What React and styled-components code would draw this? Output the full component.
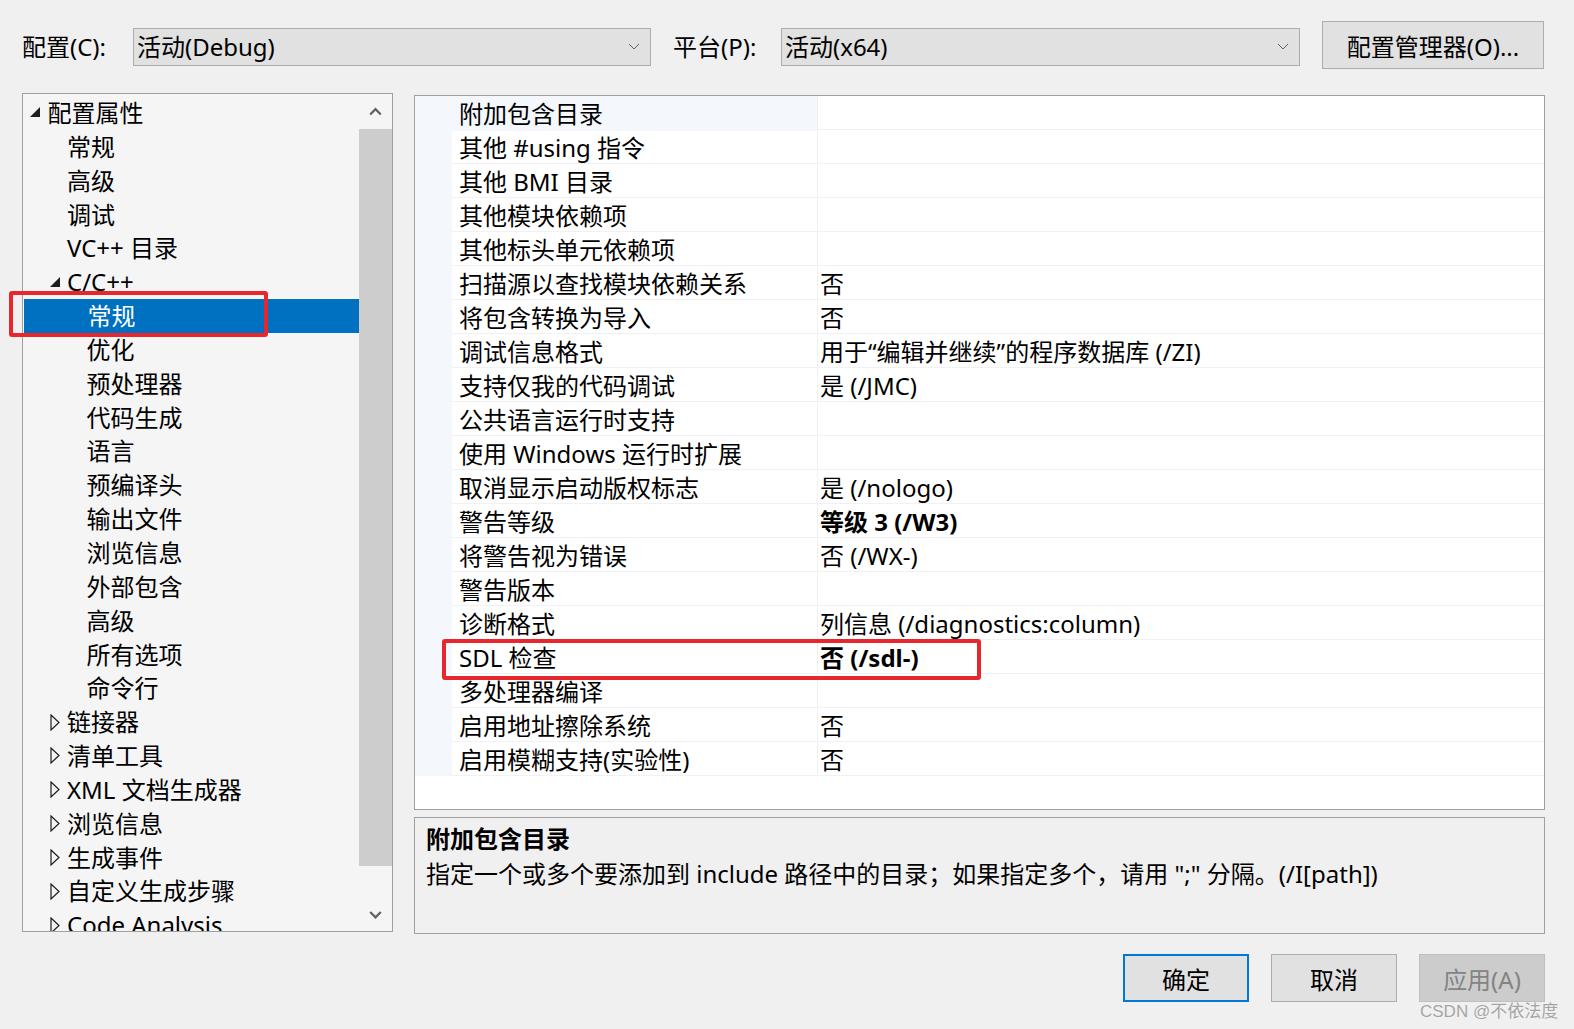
import React from "react";
import styled, { createGlobalStyle } from "styled-components";

const GlobalStyle = createGlobalStyle`
  html, body {
    margin: 0;
    padding: 0;
    background: #f0f0f0;
  }
  body {
    font-family: "Noto Sans", "Noto Sans CJK SC", sans-serif;
    color: #000;
  }
`;

const treeItems = [
  { label: "配置属性", level: 0, arrow: "open" },
  { label: "常规", level: 1 },
  { label: "高级", level: 1 },
  { label: "调试", level: 1 },
  { label: "VC++ 目录", level: 1 },
  { label: "C/C++", level: 1, arrow: "open" },
  { label: "常规", level: 2, selected: true },
  { label: "优化", level: 2 },
  { label: "预处理器", level: 2 },
  { label: "代码生成", level: 2 },
  { label: "语言", level: 2 },
  { label: "预编译头", level: 2 },
  { label: "输出文件", level: 2 },
  { label: "浏览信息", level: 2 },
  { label: "外部包含", level: 2 },
  { label: "高级", level: 2 },
  { label: "所有选项", level: 2 },
  { label: "命令行", level: 2 },
  { label: "链接器", level: 1, arrow: "closed" },
  { label: "清单工具", level: 1, arrow: "closed" },
  { label: "XML 文档生成器", level: 1, arrow: "closed" },
  { label: "浏览信息", level: 1, arrow: "closed" },
  { label: "生成事件", level: 1, arrow: "closed" },
  { label: "自定义生成步骤", level: 1, arrow: "closed" },
  { label: "Code Analysis", level: 1, arrow: "closed" },
];

const props = [
  { name: "附加包含目录", value: "", current: true },
  { name: "其他 #using 指令", value: "" },
  { name: "其他 BMI 目录", value: "" },
  { name: "其他模块依赖项", value: "" },
  { name: "其他标头单元依赖项", value: "" },
  { name: "扫描源以查找模块依赖关系", value: "否" },
  { name: "将包含转换为导入", value: "否" },
  { name: "调试信息格式", value: "用于“编辑并继续”的程序数据库 (/ZI)" },
  { name: "支持仅我的代码调试", value: "是 (/JMC)" },
  { name: "公共语言运行时支持", value: "" },
  { name: "使用 Windows 运行时扩展", value: "" },
  { name: "取消显示启动版权标志", value: "是 (/nologo)" },
  { name: "警告等级", value: "等级 3 (/W3)", bold: true },
  { name: "将警告视为错误", value: "否 (/WX-)" },
  { name: "警告版本", value: "" },
  { name: "诊断格式", value: "列信息 (/diagnostics:column)" },
  { name: "SDL 检查", value: "否 (/sdl-)", bold: true },
  { name: "多处理器编译", value: "" },
  { name: "启用地址擦除系统", value: "否" },
  { name: "启用模糊支持(实验性)", value: "否" },
];

const Chevron = ({ dir = "down", size = 12, stroke = 1, color = "#606060" }) => (
  <svg width={size} height={size / 2 + 2} viewBox="0 0 12 8">
    {dir === "down" ? (
      <polyline points="1,1 6,6 11,1" fill="none" stroke={color} strokeWidth={stroke} />
    ) : (
      <polyline points="1,7 6,2 11,7" fill="none" stroke={color} strokeWidth={stroke} />
    )}
  </svg>
);

const Arrow = ({ kind }) =>
  kind === "open" ? (
    <svg width="11" height="11" viewBox="0 0 11 11">
      <polygon points="10,0 10,10 0,10" fill="#1e1e1e" />
    </svg>
  ) : (
    <svg width="10" height="17" viewBox="0 0 10 17">
      <polygon points="1,1 9,8.5 1,16" fill="none" stroke="#1e1e1e" strokeWidth="1.2" />
    </svg>
  );

export default function App() {
  return (
    <Page>
      <GlobalStyle />
      <TopBar>
        <FieldLabel width={111}>配置(C):</FieldLabel>
        <Combo width={518}>
          <span>活动(Debug)</span>
          <Chevron />
        </Combo>
        <FieldLabel width={108} gap={22}>平台(P):</FieldLabel>
        <Combo width={519}>
          <span>活动(x64)</span>
          <Chevron />
        </Combo>
        <ManagerButton>配置管理器(O)...</ManagerButton>
      </TopBar>

      <Main>
        <TreeWrap>
          <TreePanel>
            <TreeList>
              {treeItems.map((it, i) => (
                <TreeRow key={i} level={it.level} selected={it.selected}>
                  <ArrowSlot>{it.arrow && <Arrow kind={it.arrow} />}</ArrowSlot>
                  <span>{it.label}</span>
                </TreeRow>
              ))}
            </TreeList>
            <ScrollBar>
              <ScrollButton>
                <Chevron dir="up" stroke={2} size={13} />
              </ScrollButton>
              <ScrollThumb />
              <ScrollButton bottom>
                <Chevron dir="down" stroke={2} size={13} />
              </ScrollButton>
            </ScrollBar>
          </TreePanel>
          <Highlight top={198} left={-13} width={259} height={46} />
        </TreeWrap>

        <RightColumn>
          <GridPanel>
            <GridBody>
              <Gutter />
              <Rows>
                {props.map((p, i) => (
                  <PropRow key={i}>
                    <NameCell current={p.current}>{p.name}</NameCell>
                    <ValueCell bold={p.bold}>{p.value}</ValueCell>
                  </PropRow>
                ))}
              </Rows>
            </GridBody>
            <Highlight top={543} left={27} width={539} height={41} />
          </GridPanel>
          <DescPanel>
            <DescTitle>附加包含目录</DescTitle>
            <DescText>
              指定一个或多个要添加到 include 路径中的目录；如果指定多个，请用 ";" 分隔。(/I[path])
            </DescText>
          </DescPanel>
        </RightColumn>
      </Main>

      <Footer>
        <DialogButton primary>确定</DialogButton>
        <DialogButton>取消</DialogButton>
        <DialogButton disabled>应用(A)</DialogButton>
      </Footer>

      <Watermark>CSDN @不依法度</Watermark>
    </Page>
  );
}

const Page = styled.div`
  position: relative;
  width: 1574px;
  height: 1029px;
  overflow: hidden;
  background: #f0f0f0;
  font-size: 24px;
  padding-left: 22px;
  box-sizing: border-box;
`;

const TopBar = styled.div`
  display: flex;
  align-items: center;
  height: 48px;
  margin-top: 21px;
`;

const FieldLabel = styled.div`
  width: ${(p) => p.width}px;
  margin-left: ${(p) => p.gap || 0}px;
  margin-top: 4px;
  line-height: 38px;
  white-space: nowrap;
`;

const Combo = styled.div`
  box-sizing: border-box;
  width: ${(p) => p.width}px;
  height: 38px;
  margin-top: 4px;
  display: flex;
  align-items: center;
  justify-content: space-between;
  padding: 0 10px 0 3px;
  background: #e1e1e1;
  border: 1px solid #adadad;
  line-height: 36px;
  white-space: nowrap;
`;

const ManagerButton = styled.div`
  box-sizing: border-box;
  width: 222px;
  height: 48px;
  margin-left: 22px;
  display: flex;
  align-items: center;
  justify-content: center;
  background: #e1e1e1;
  border: 1px solid #adadad;
  white-space: nowrap;
`;

const Main = styled.div`
  display: flex;
  align-items: flex-start;
  margin-top: 24px;
`;

const TreeWrap = styled.div`
  position: relative;
  width: 371px;
  height: 839px;
  flex-shrink: 0;
`;

const TreePanel = styled.div`
  box-sizing: border-box;
  width: 100%;
  height: 100%;
  display: flex;
  border: 1px solid #a0a0a0;
  background: #f5f5f5;
  overflow: hidden;
`;

const TreeList = styled.div`
  flex: 1;
  padding-top: 2px;
  overflow: hidden;
`;

const TreeRow = styled.div`
  display: flex;
  align-items: center;
  height: 33.85px;
  line-height: 33.85px;
  padding-left: ${(p) => 7 + p.level * 19.5}px;
  margin-left: ${(p) => (p.selected ? 1 : 0)}px;
  white-space: nowrap;
  background: ${(p) => (p.selected ? "#0070c0" : "transparent")};
  color: ${(p) => (p.selected ? "#fff" : "#000")};
`;

const ArrowSlot = styled.span`
  display: flex;
  align-items: center;
  width: 17.5px;
  flex-shrink: 0;
`;

const ScrollBar = styled.div`
  width: 33px;
  display: flex;
  flex-direction: column;
  background: #f0f0f0;
`;

const ScrollButton = styled.div`
  height: ${(p) => (p.bottom ? 65 : 35)}px;
  display: flex;
  align-items: ${(p) => (p.bottom ? "flex-end" : "center")};
  padding-bottom: ${(p) => (p.bottom ? 12 : 0)}px;
  box-sizing: border-box;
  justify-content: center;
  background: #f5f5f5;
`;

const ScrollThumb = styled.div`
  flex: 1;
  background: #cdcdcd;
`;

const Highlight = styled.div`
  position: absolute;
  top: ${(p) => p.top}px;
  left: ${(p) => p.left}px;
  width: ${(p) => p.width}px;
  height: ${(p) => p.height}px;
  box-sizing: border-box;
  border: 4px solid #e8262e;
  border-radius: 3px;
  pointer-events: none;
`;

const RightColumn = styled.div`
  display: flex;
  flex-direction: column;
  gap: 7px;
  width: 1131px;
  margin-left: 21px;
  margin-top: 2px;
`;

const GridPanel = styled.div`
  position: relative;
  box-sizing: border-box;
  height: 715px;
  border: 1px solid #a0a0a0;
  background: #fff;
`;

const GridBody = styled.div`
  display: flex;
  align-items: flex-start;
`;

const Gutter = styled.div`
  width: 37px;
  height: 680px;
  background: #f4f7fc;
  flex-shrink: 0;
`;

const Rows = styled.div`
  flex: 1;
`;

const PropRow = styled.div`
  display: grid;
  grid-template-columns: 366px 1fr;
  height: 34px;
  box-sizing: border-box;
  border-bottom: 1px solid #f1f1f3;
  line-height: 35px;
  white-space: nowrap;
`;

const NameCell = styled.div`
  padding-left: 7px;
  border-right: 1px solid #f1f1f3;
  background: ${(p) => (p.current ? "#f4f7fc" : "transparent")};
`;

const ValueCell = styled.div`
  padding-left: 2px;
  font-weight: ${(p) => (p.bold ? 700 : 400)};
`;

const DescPanel = styled.div`
  box-sizing: border-box;
  height: 117px;
  border: 1px solid #a0a0a0;
  background: #f0f0f0;
  padding: 3px 11px 0;
`;

const DescTitle = styled.div`
  font-weight: 700;
  line-height: 35px;
`;

const DescText = styled.div`
  line-height: 35px;
  white-space: nowrap;
`;

const Footer = styled.div`
  display: flex;
  justify-content: flex-end;
  gap: 22px;
  margin-top: 20px;
  padding-right: 29px;
`;

const DialogButton = styled.div`
  box-sizing: border-box;
  width: 126px;
  height: 48px;
  display: flex;
  align-items: center;
  justify-content: center;
  background: ${(p) => (p.disabled ? "#cccccc" : "#e1e1e1")};
  border: ${(p) => (p.primary ? "2px solid #0078d7" : p.disabled ? "1px solid #bfbfbf" : "1px solid #adadad")};
  color: ${(p) => (p.disabled ? "#838383" : "#000")};
`;

const Watermark = styled.div`
  position: absolute;
  left: 1420px;
  top: 997px;
  font-family: "Liberation Sans", "Noto Sans CJK SC", sans-serif;
  font-size: 17px;
  color: #a3a3a3;
  white-space: nowrap;
  text-shadow: 0 0 1px #fff;
`;
